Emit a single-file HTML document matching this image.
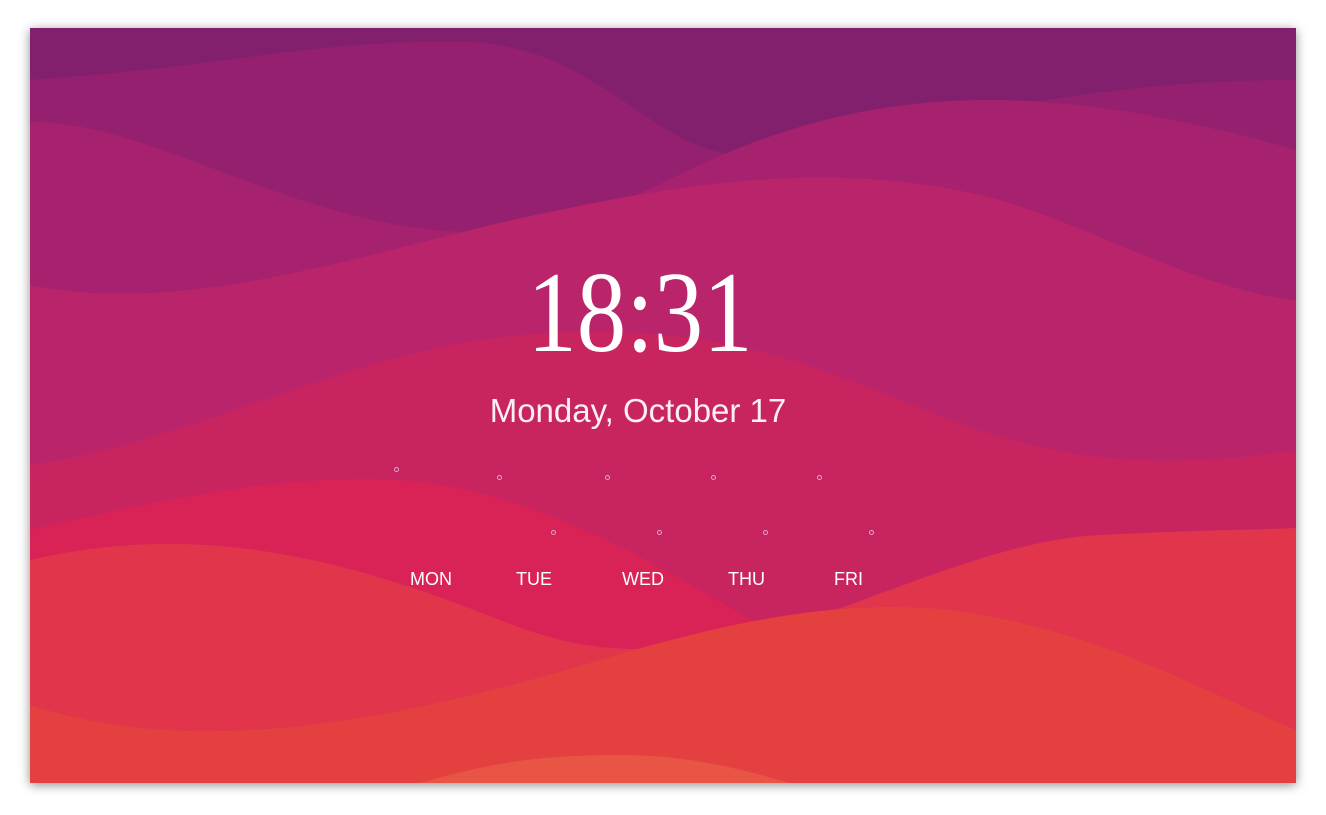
<!DOCTYPE html>
<html><head><meta charset="utf-8"><style>
html,body{margin:0;padding:0;background:#fff;width:1326px;height:815px;overflow:hidden}
.card{position:absolute;left:30px;top:28px;width:1266px;height:755px;box-shadow:0 2px 10px rgba(0,0,0,.45);overflow:hidden}
svg{position:absolute;left:0;top:0}
.t{position:absolute;color:#fff;font-family:"Liberation Sans",sans-serif;white-space:nowrap}
.clock{left:0;width:1280px;text-align:center;top:255px;font-family:"Liberation Serif",serif;font-size:115px;line-height:115px;transform:scaleX(0.86);transform-origin:640px 0}
.date{left:0;width:1276px;text-align:center;top:389px;font-size:33px;line-height:44px;font-weight:normal;color:#fbeef6}
.d{top:568px;font-size:18px;line-height:22px}
.dot{position:absolute;width:3px;height:3px;border:1px solid #d8a8d8;border-radius:50%}
</style></head><body>
<div class="card"></div>
<svg width="1326" height="815" viewBox="0 0 1326 815">
<defs><clipPath id="c"><rect x="30" y="28" width="1266" height="755"/></clipPath></defs>
<g clip-path="url(#c)">
<rect x="30" y="28" width="1266" height="755" fill="#83206e"/>
<path d="M30,80 C200,70 320,38 470,42 C600,48 650,150 740,155 C850,160 1000,80 1296,80 V783H30Z" fill="#95206f"/>
<path d="M30,122 C150,120 300,230 470,232 C600,232 650,180 760,140 C900,90 1050,80 1296,150 V783H30Z" fill="#a7226e"/>
<path d="M30,285 C200,320 400,240 560,210 C700,180 850,160 1000,200 C1100,230 1200,290 1296,300 V783H30Z" fill="#b9246a"/>
<path d="M30,465 C200,440 350,350 520,335 C700,320 800,360 900,400 C1000,440 1100,480 1296,450 V783H30Z" fill="#c8245f"/>
<path d="M30,530 C200,490 300,475 400,480 C550,490 700,590 800,650 L1296,650 V783H30Z" fill="#d92357"/>
<path d="M30,560 C200,520 350,560 500,620 C600,660 650,650 750,640 C900,590 1000,540 1100,535 C1200,530 1250,530 1296,528 V783H30Z" fill="#e0354a"/>
<path d="M30,705 C200,760 400,720 600,660 C750,615 850,600 950,610 C1100,630 1200,690 1296,730 V783H30Z" fill="#e3403f"/>
<path d="M420,783 C500,760 550,755 620,755 C700,755 760,775 790,783Z" fill="#e85545"/>
</g>
</svg>
<div class="t clock">18:31</div>
<div class="t date">Monday, October 17</div>
<div class="dot" style="left:394px;top:467px"></div>
<div class="dot" style="left:497px;top:475px"></div>
<div class="dot" style="left:605px;top:475px"></div>
<div class="dot" style="left:711px;top:475px"></div>
<div class="dot" style="left:817px;top:475px"></div>
<div class="dot" style="left:551px;top:530px"></div>
<div class="dot" style="left:657px;top:530px"></div>
<div class="dot" style="left:763px;top:530px"></div>
<div class="dot" style="left:869px;top:530px"></div>
<div class="t d" style="left:410px">MON</div>
<div class="t d" style="left:516px">TUE</div>
<div class="t d" style="left:622px">WED</div>
<div class="t d" style="left:728px">THU</div>
<div class="t d" style="left:834px">FRI</div>
</body></html>
